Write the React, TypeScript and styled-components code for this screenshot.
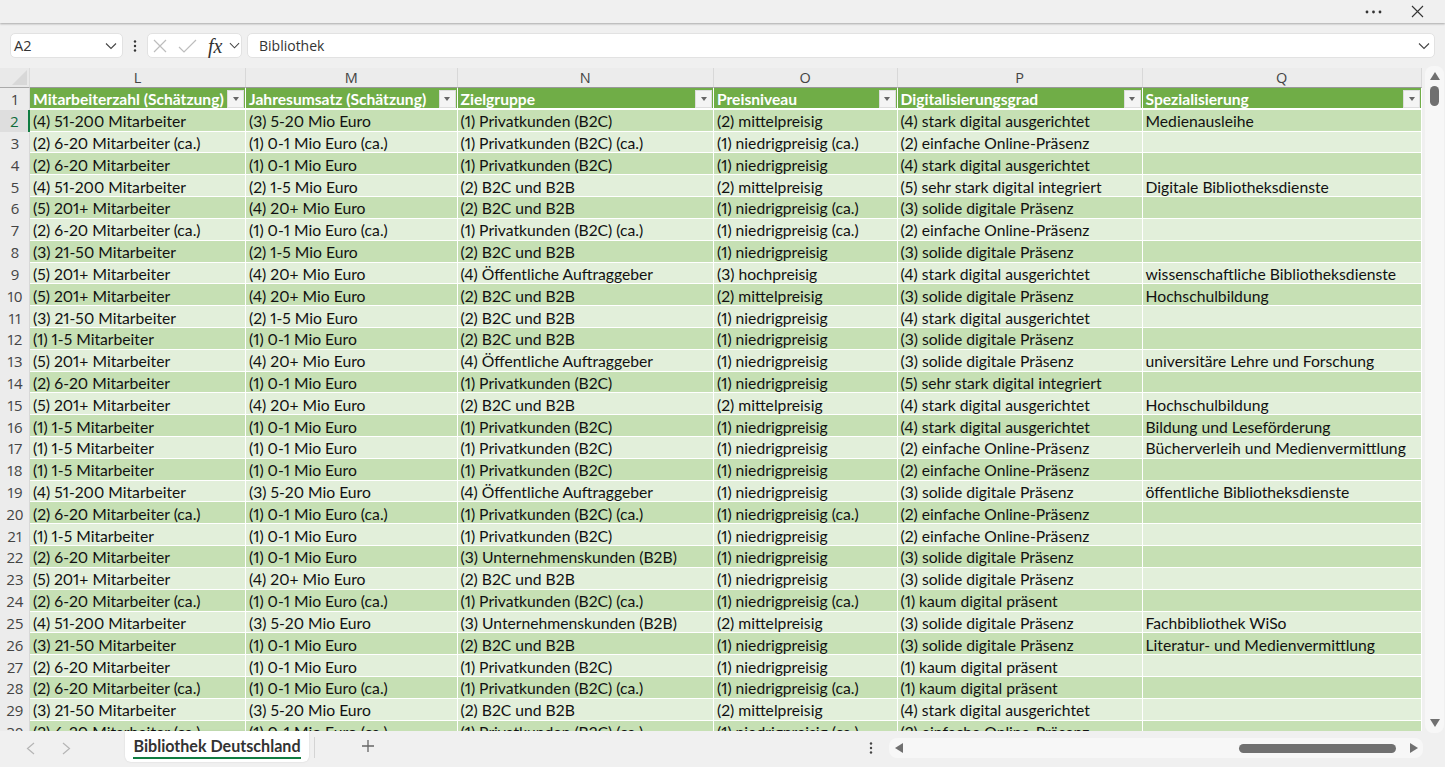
import React from "react";
import styled, { createGlobalStyle } from "styled-components";

const Global = createGlobalStyle`
  html, body { margin: 0; padding: 0; width: 1445px; height: 767px; overflow: hidden; background: #f0f0f0; }
  * { box-sizing: border-box; }
  #root { width: 1445px; height: 767px; }
`;

const Page = styled.div`
  width: 1445px; height: 767px; display: flex; flex-direction: column; background: #f0f0f0;
  font-family: "Lato", "Open Sans", sans-serif; color: #111; overflow: hidden;
`;
const TitleBar = styled.div`
  height: 23px; flex: none; display: flex; align-items: center; justify-content: flex-end; gap: 29px;
  padding-right: 21px; background: #f0f0f0; box-shadow: 0 1px 2px rgba(0,0,0,.3); position: relative;
`;
const IconBtn = styled.span<{ $l?: number; $r?: number }>`
  display: inline-flex; align-items: center; justify-content: center; color: #333;
  margin-left: ${p => p.$l ?? 0}px; margin-right: ${p => p.$r ?? 0}px;
`;
const FormulaRow = styled.div`
  height: 25px; margin-top: 10px; flex: none; display: flex; align-items: center; padding: 0 10px;
`;
const Box = styled.div<{ $w?: number }>`
  height: 25px; ${p => (p.$w ? `width: ${p.$w}px; flex: none;` : "flex: 1;")}
  background: #fff; border: 1px solid #e2e2e2; border-radius: 5px; display: flex; align-items: center;
  color: #333; position: relative;
`;
const NameText = styled.span`margin-left: 3px; flex: 1; font-family: "Open Sans", sans-serif; font-size: 14.5px;`;
const FormulaText = styled.span`margin-left: 11px; flex: 1; font-family: "Open Sans", sans-serif; font-size: 14px;`;
const Dots = styled.span`width: 24px; flex: none; display: flex; justify-content: center;`;
const Fx = styled.span`
  font-family: "Liberation Serif", serif; font-style: italic; font-size: 20px; line-height: 20px; color: #333; margin-left: 11px; width: 18px;
`;
const Gap = styled.span`width: 5px; flex: none;`;

const SheetArea = styled.div`
  margin-top: 10px; height: 663px; flex: none; display: flex; align-items: flex-start; position: relative;
`;
const Sheet = styled.div`width: 1422px; height: 663px; overflow: hidden; flex: none;`;
const Grid = styled.div`
  display: grid; grid-template-columns: 30px 216px 211.5px 256.5px 183.5px 245px 279.5px;
  grid-template-rows: 20px repeat(30, 21.82px);
  font-variant-numeric: proportional-nums;
`;
const Corner = styled.div`background: #e9e9e9; position: relative; border-bottom: 1px solid #aaa; border-right: 1px solid #dcdcdc;
  &::after { content: ""; position: absolute; right: 2px; bottom: 2px; width: 0; height: 0; border-style: solid; border-width: 0 0 15px 15px; border-color: transparent transparent #d8d8d8 transparent; }
`;
const ColHead = styled.div`
  background: #ececec; border-right: 1px solid #d8d8d8; border-bottom: 1px solid #999;
  display: flex; align-items: center; justify-content: center; font-size: 14.5px; color: #444; font-family: "Open Sans", sans-serif;
`;
const RowHead = styled.div<{ $active?: boolean }>`
  background: ${p => (p.$active ? "#dedede" : "#ececec")};
  color: ${p => (p.$active ? "#0e6b3a" : "#444")};
  border-right: ${p => (p.$active ? "2px solid #107c41" : "1px solid #d8d8d8")};
  display: flex; align-items: center; justify-content: center; font-size: 15px; padding: 1px 0 0 1px;
  font-family: "Open Sans", sans-serif;
`;
const HeadCell = styled.div`
  background: #70ad47; color: #fff; font-weight: 700; font-size: 15.6px; padding: 2px 3px 0; position: relative;
  display: flex; align-items: center; white-space: nowrap; border-right: 1px solid #fff; border-bottom: 2px solid #fff;
`;
const FilterBtn = styled.span`
  position: absolute; right: 1px; top: 2px; width: 17px; height: 18px; background: #f4f4f4; border: 1px solid #ddd;
  display: flex; align-items: center; justify-content: center;
  &::after { content: ""; border-style: solid; border-width: 4px 3.5px 0 3.5px; border-color: #666 transparent transparent transparent; }
`;
const Cell = styled.div<{ $dark: boolean }>`
  background: ${p => (p.$dark ? "#c6e0b4" : "#e2efda")};
  color: #111; font-size: 15.7px; padding: 2px 3px 0; display: flex; align-items: center; white-space: nowrap;
  border-right: 1px solid #fff; border-bottom: 1px solid #fff; overflow: hidden;
`;

const VScroll = styled.div`
  width: 19px; height: 667px; margin: -2px 0 0 3px; border-radius: 8px; background: #f7f7f7; flex: none; position: relative;
  display: flex; flex-direction: column; align-items: center; padding-top: 6px;
`;
const VThumb = styled.div`width: 9px; height: 20px; border-radius: 5px; background: #707070; margin-top: 6px;`;
const ArrowUp = styled.div`width: 0; height: 0; border-style: solid; border-width: 0 5.5px 8px; border-color: transparent transparent #707070;`;
const ArrowDown = styled.div`position: absolute; bottom: 6px; width: 0; height: 0; border-style: solid; border-width: 8px 5.5px 0; border-color: #707070 transparent transparent;`;

const BottomBar = styled.div`height: 36px; flex: none; display: flex; align-items: flex-start; position: relative;`;
const NavBtns = styled.div`width: 125px; flex: none; height: 34px; display: flex; align-items: center; padding-left: 26px; gap: 27px;`;
const Tab = styled.div`
  width: 184px; height: 31px; flex: none; background: #fff; border-radius: 0 0 6px 6px; display: flex; flex-direction: column;
  align-items: center; padding-top: 5px; box-shadow: 0 0 2px rgba(0,0,0,.12);
`;
const TabText = styled.span`
  font-family: "Lato", sans-serif; font-weight: 700; font-size: 16.1px; line-height: 19px; color: #333; border-bottom: 2px solid #107c41; height: 23px;
  white-space: nowrap;
`;
const TabSep = styled.div`width: 1px; height: 21px; margin: 6px 0 0 5px; background: #d4d4d4; flex: none;`;
const Plus = styled.div`margin: 8px 0 0 46px; flex: none; color: #666; display: flex; width: 14px;`;
const BarSpacer = styled.div`flex: 1;`;
const SheetDots = styled.div`width: 14px; margin-top: 11px; flex: none; display: flex; justify-content: center; margin-right: 11px;`;
const HScroll = styled.div`
  width: 534px; height: 20px; margin: 7px 22px 0 0; flex: none; border-radius: 8px; background: #f7f7f7; display: flex; align-items: center; padding: 0 5px 0 6px;
`;
const ArrowLeft = styled.div`width: 0; height: 0; border-style: solid; border-width: 5px 8px 5px 0; border-color: transparent #707070 transparent transparent;`;
const ArrowRight = styled.div`width: 0; height: 0; border-style: solid; border-width: 5px 0 5px 8px; border-color: transparent transparent transparent #707070;`;
const HTrack = styled.div`flex: 1; display: flex; justify-content: flex-end; padding-right: 14px;`;
const HThumb = styled.div`width: 157px; height: 9px; border-radius: 5px; background: #707070;`;

const Chevron = ({ size = 12 }: { size?: number }) => (
  <svg width={size} height={size} viewBox="0 0 12 12" fill="none" stroke="#444" strokeWidth="1.1"><path d="M1 3.5 6 8.5 11 3.5" /></svg>
);
const VDots = ({ color = "#333" }: { color?: string }) => (
  <svg width="4" height="12" viewBox="0 0 4 12" fill={color}><circle cx="2" cy="1.5" r="1.2" /><circle cx="2" cy="6" r="1.2" /><circle cx="2" cy="10.5" r="1.2" /></svg>
);

const headers = ["Mitarbeiterzahl (Schätzung)", "Jahresumsatz (Schätzung)", "Zielgruppe", "Preisniveau", "Digitalisierungsgrad", "Spezialisierung"];
const colLetters = ["L", "M", "N", "O", "P", "Q"];

const M = ["", "(1) 1-5 Mitarbeiter", "(2) 6-20 Mitarbeiter", "(3) 21-50 Mitarbeiter", "(4) 51-200 Mitarbeiter", "(5) 201+ Mitarbeiter", "(2) 6-20 Mitarbeiter (ca.)"];
const U = ["", "(1) 0-1 Mio Euro", "(2) 1-5 Mio Euro", "(3) 5-20 Mio Euro", "(4) 20+ Mio Euro", "(1) 0-1 Mio Euro (ca.)"];
const Z = ["", "(1) Privatkunden (B2C)", "(2) B2C und B2B", "(3) Unternehmenskunden (B2B)", "(4) Öffentliche Auftraggeber", "(1) Privatkunden (B2C) (ca.)"];
const P = ["", "(1) niedrigpreisig", "(2) mittelpreisig", "(3) hochpreisig", "(1) niedrigpreisig (ca.)"];
const D = ["", "(1) kaum digital präsent", "(2) einfache Online-Präsenz", "(3) solide digitale Präsenz", "(4) stark digital ausgerichtet", "(5) sehr stark digital integriert"];

const raw: [number, number, number, number, number, string][] = [
  [4, 3, 1, 2, 4, "Medienausleihe"],
  [6, 5, 5, 4, 2, ""],
  [2, 1, 1, 1, 4, ""],
  [4, 2, 2, 2, 5, "Digitale Bibliotheksdienste"],
  [5, 4, 2, 4, 3, ""],
  [6, 5, 5, 4, 2, ""],
  [3, 2, 2, 1, 3, ""],
  [5, 4, 4, 3, 4, "wissenschaftliche Bibliotheksdienste"],
  [5, 4, 2, 2, 3, "Hochschulbildung"],
  [3, 2, 2, 1, 4, ""],
  [1, 1, 2, 1, 3, ""],
  [5, 4, 4, 1, 3, "universitäre Lehre und Forschung"],
  [2, 1, 1, 1, 5, ""],
  [5, 4, 2, 2, 4, "Hochschulbildung"],
  [1, 1, 1, 1, 4, "Bildung und Leseförderung"],
  [1, 1, 1, 1, 2, "Bücherverleih und Medienvermittlung"],
  [1, 1, 1, 1, 2, ""],
  [4, 3, 4, 1, 3, "öffentliche Bibliotheksdienste"],
  [6, 5, 5, 4, 2, ""],
  [1, 1, 1, 1, 2, ""],
  [2, 1, 3, 1, 3, ""],
  [5, 4, 2, 1, 3, ""],
  [6, 5, 5, 4, 1, ""],
  [4, 3, 3, 2, 3, "Fachbibliothek WiSo"],
  [3, 1, 2, 1, 3, "Literatur- und Medienvermittlung"],
  [2, 1, 1, 1, 1, ""],
  [6, 5, 5, 4, 1, ""],
  [3, 3, 2, 2, 4, ""],
  [6, 5, 5, 4, 2, ""],
];

export default function App() {
  return (
    <Page>
      <Global />
      <TitleBar>
        <IconBtn>
          <svg width="17" height="4" viewBox="0 0 17 4" fill="#333"><circle cx="2" cy="2" r="1.4" /><circle cx="8.5" cy="2" r="1.4" /><circle cx="15" cy="2" r="1.4" /></svg>
        </IconBtn>
        <IconBtn>
          <svg width="13" height="13" viewBox="0 0 13 13" stroke="#333" strokeWidth="1.1"><path d="M1 1 12 12M12 1 1 12" /></svg>
        </IconBtn>
      </TitleBar>
      <FormulaRow>
        <Box $w={113}>
          <NameText>A2</NameText>
          <IconBtn $r={5}><Chevron /></IconBtn>
        </Box>
        <Dots><VDots /></Dots>
        <Box $w={95}>
          <IconBtn $l={5}>
            <svg width="14" height="14" viewBox="0 0 14 14" stroke="#bdbdbd" strokeWidth="1.2" fill="none"><path d="M1 1 13 13M13 1 1 13" /></svg>
          </IconBtn>
          <IconBtn $l={11}>
            <svg width="19" height="14" viewBox="0 0 19 14" stroke="#bdbdbd" strokeWidth="1.2" fill="none"><path d="M1 8 6 13 18 1" /></svg>
          </IconBtn>
          <Fx>fx</Fx>
          <IconBtn $l={3}><Chevron size={11} /></IconBtn>
        </Box>
        <Gap />
        <Box>
          <FormulaText>Bibliothek</FormulaText>
          <IconBtn $r={4}><Chevron /></IconBtn>
        </Box>
      </FormulaRow>
      <SheetArea>
        <Sheet>
          <Grid>
            <Corner />
            {colLetters.map(c => <ColHead key={c}>{c}</ColHead>)}
            <RowHead>1</RowHead>
            {headers.map(h => <HeadCell key={h}>{h}<FilterBtn /></HeadCell>)}
            {raw.map((r, i) => {
              const dark = i % 2 === 0;
              return (
                <React.Fragment key={i}>
                  <RowHead $active={i === 0}>{i + 2}</RowHead>
                  <Cell $dark={dark}>{M[r[0]]}</Cell>
                  <Cell $dark={dark}>{U[r[1]]}</Cell>
                  <Cell $dark={dark}>{Z[r[2]]}</Cell>
                  <Cell $dark={dark}>{P[r[3]]}</Cell>
                  <Cell $dark={dark}>{D[r[4]]}</Cell>
                  <Cell $dark={dark}>{r[5]}</Cell>
                </React.Fragment>
              );
            })}
          </Grid>
        </Sheet>
        <VScroll>
          <ArrowUp />
          <VThumb />
          <ArrowDown />
        </VScroll>
      </SheetArea>
      <BottomBar>
        <NavBtns>
          <svg width="9" height="13" viewBox="0 0 9 13" stroke="#b5b5b5" strokeWidth="1.2" fill="none"><path d="M8 1 1.5 6.5 8 12" /></svg>
          <svg width="9" height="13" viewBox="0 0 9 13" stroke="#b5b5b5" strokeWidth="1.2" fill="none"><path d="M1 1 7.5 6.5 1 12" /></svg>
        </NavBtns>
        <Tab><TabText>Bibliothek Deutschland</TabText></Tab>
        <TabSep />
        <Plus>
          <svg width="14" height="14" viewBox="0 0 14 14" stroke="#666" strokeWidth="1.3"><path d="M7 1V13M1 7H13" /></svg>
        </Plus>
        <BarSpacer />
        <SheetDots><VDots color="#444" /></SheetDots>
        <HScroll>
          <ArrowLeft />
          <HTrack><HThumb /></HTrack>
          <ArrowRight />
        </HScroll>
      </BottomBar>
    </Page>
  );
}
